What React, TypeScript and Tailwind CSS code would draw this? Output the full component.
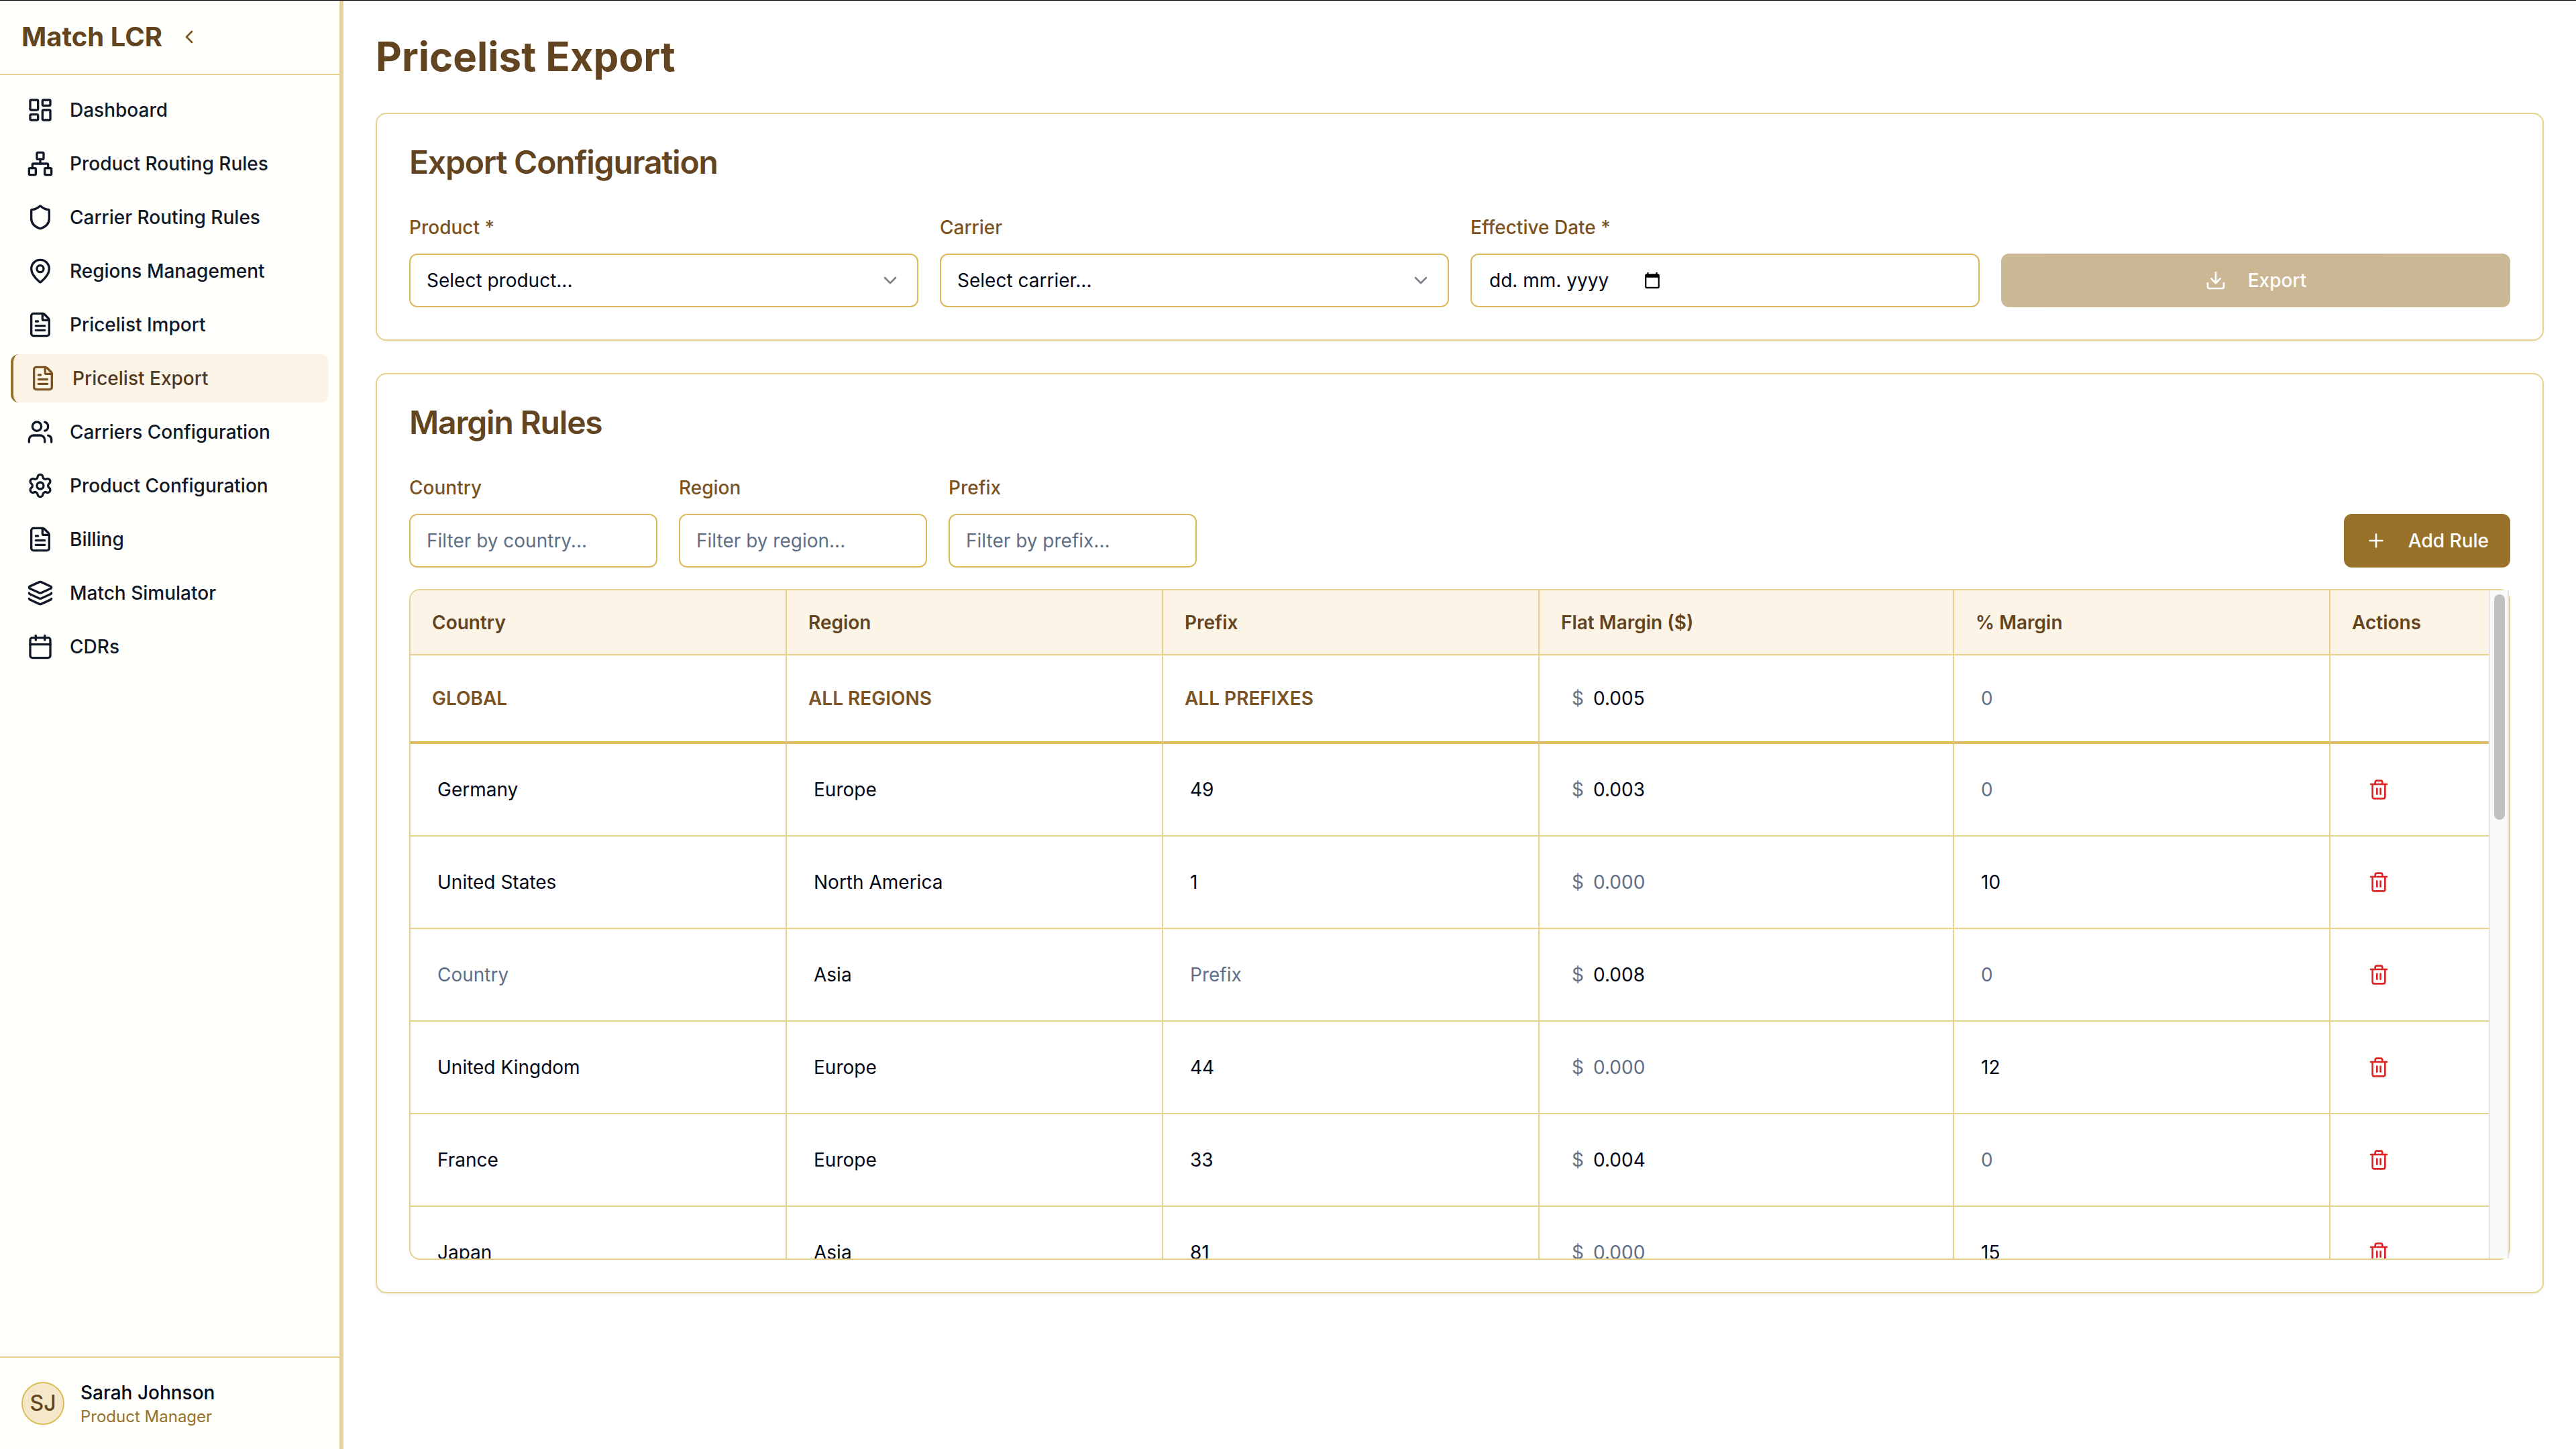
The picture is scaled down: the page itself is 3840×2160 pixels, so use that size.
import {
  Calendar,
  ChevronDown,
  ChevronLeft,
  Download,
  FileText,
  Layers,
  LayoutDashboard,
  MapPin,
  Network,
  Plus,
  Settings,
  Shield,
  Trash2,
  Users,
  type LucideIcon,
} from "lucide-react";

type NavEntry = { label: string; icon: LucideIcon; active?: boolean };

const navEntries: NavEntry[] = [
  { label: "Dashboard", icon: LayoutDashboard },
  { label: "Product Routing Rules", icon: Network },
  { label: "Carrier Routing Rules", icon: Shield },
  { label: "Regions Management", icon: MapPin },
  { label: "Pricelist Import", icon: FileText },
  { label: "Pricelist Export", icon: FileText, active: true },
  { label: "Carriers Configuration", icon: Users },
  { label: "Product Configuration", icon: Settings },
  { label: "Billing", icon: FileText },
  { label: "Match Simulator", icon: Layers },
  { label: "CDRs", icon: Calendar },
];

type Rule = { country: string; region: string; prefix: string; flat: string; percent: string };

const rules: Rule[] = [
  { country: "Germany", region: "Europe", prefix: "49", flat: "0.003", percent: "" },
  { country: "United States", region: "North America", prefix: "1", flat: "", percent: "10" },
  { country: "", region: "Asia", prefix: "", flat: "0.008", percent: "" },
  { country: "United Kingdom", region: "Europe", prefix: "44", flat: "", percent: "12" },
  { country: "France", region: "Europe", prefix: "33", flat: "0.004", percent: "" },
  { country: "Japan", region: "Asia", prefix: "81", flat: "", percent: "15" },
];

const fieldClass =
  "h-20 w-full rounded-xl border-2 border-[#dbb95c] bg-white px-6 text-[28px] text-[#020817] placeholder:text-[#5f6f87] placeholder:opacity-100";

function Sidebar() {
  return (
    <aside className="sticky top-0 flex h-screen w-[512px] shrink-0 flex-col border-r-[6px] border-[#e6d3a0] bg-[#fffffb]">
      <div className="flex h-28 items-center gap-4 border-b-2 border-[#e6d28c] px-8">
        <span className="text-[40px] leading-14 font-bold text-[#634420]">Match LCR</span>
        <button type="button" aria-label="Collapse sidebar" className="flex size-12 items-center justify-center">
          <ChevronLeft className="size-8 text-[#7b5323]" />
        </button>
      </div>
      <nav className="flex flex-1 flex-col gap-2 p-4">
        {navEntries.map(({ label, icon: Icon, active }) => (
          <a
            key={label}
            href="#"
            aria-current={active ? "page" : undefined}
            className={
              active
                ? "flex h-18 items-center gap-6 rounded-xl border-l-4 border-[#98722b] bg-[#fcf5e7] px-6 text-[28px] font-medium text-[#533a20]"
                : "flex h-18 items-center gap-6 rounded-xl px-6 text-[28px] font-medium text-[#111827]"
            }
          >
            <Icon className={active ? "size-10 text-[#7b5323]" : "size-10"} />
            {label}
          </a>
        ))}
      </nav>
      <div className="flex items-center gap-6 border-t-2 border-[#e6d28c] p-8">
        <div className="flex size-16 items-center justify-center rounded-full border-2 border-[#dbbd5d] bg-[#f4e8c8] text-[32px] font-medium text-[#634420]">
          SJ
        </div>
        <div>
          <p className="text-[28px] leading-10 font-medium text-[#020817]">Sarah Johnson</p>
          <p className="text-2xl leading-8 text-[#98722b]">Product Manager</p>
        </div>
      </div>
    </aside>
  );
}

function FieldLabel({ htmlFor, children }: { htmlFor: string; children: string }) {
  return (
    <label htmlFor={htmlFor} className="mb-[14px] block text-[28px] leading-[50px] font-medium text-[#7b5323]">
      {children}
    </label>
  );
}

function SelectField({ id, label, placeholder }: { id: string; label: string; placeholder: string }) {
  return (
    <div>
      <FieldLabel htmlFor={id}>{label}</FieldLabel>
      <div className="relative">
        <select id={id} className={`${fieldClass} appearance-none`}>
          <option>{placeholder}</option>
        </select>
        <ChevronDown className="pointer-events-none absolute top-6 right-[26px] size-8 text-[#020817] opacity-50" />
      </div>
    </div>
  );
}

function DateField() {
  return (
    <div>
      <FieldLabel htmlFor="effective-date">Effective Date *</FieldLabel>
      <div className="flex h-20 items-center rounded-xl border-2 border-[#dbb95c] bg-white px-[26px]">
        <input
          id="effective-date"
          placeholder="dd. mm. yyyy"
          className="w-[230px] text-[28px] text-[#020817] placeholder:text-[#020817] placeholder:opacity-100"
        />
        <button type="button" aria-label="Open calendar">
          <svg viewBox="0 0 24 24" className="size-[26px] fill-black">
            <path d="M20 3h-1V1h-2v2H7V1H5v2H4c-1.1 0-2 .9-2 2v16c0 1.1.9 2 2 2h16c1.1 0 2-.9 2-2V5c0-1.1-.9-2-2-2zm0 18H4V8h16v13z" />
          </svg>
        </button>
      </div>
    </div>
  );
}

function ExportConfiguration() {
  return (
    <section className="rounded-2xl border-2 border-[#e6d28c] bg-white p-12 shadow-[0_2px_4px_rgba(0,0,0,0.05)]">
      <h2 className="mb-12 text-5xl leading-none font-semibold tracking-tight text-[#634420]">Export Configuration</h2>
      <div className="grid grid-cols-4 items-end gap-8">
        <SelectField id="product" label="Product *" placeholder="Select product..." />
        <SelectField id="carrier" label="Carrier" placeholder="Select carrier..." />
        <DateField />
        <button
          type="button"
          disabled
          className="flex h-20 items-center justify-center gap-8 rounded-xl bg-[#98722b] text-[28px] font-medium text-white opacity-50"
        >
          <Download className="size-8" />
          Export
        </button>
      </div>
    </section>
  );
}

function FilterField({ id, label, placeholder }: { id: string; label: string; placeholder: string }) {
  return (
    <div className="w-[370px]">
      <FieldLabel htmlFor={id}>{label}</FieldLabel>
      <input id={id} placeholder={placeholder} className={fieldClass} />
    </div>
  );
}

const cellBorder = "border-r-2 border-b-2 border-[#e6d28c]";
const globalBorder = "border-r-2 border-b-4 border-r-[#e6d28c] border-b-[#dbbb5c]";

function CellInput({ label, value, placeholder }: { label: string; value: string; placeholder: string }) {
  return (
    <input
      aria-label={label}
      defaultValue={value}
      placeholder={placeholder}
      className="h-16 w-full px-2 text-[28px] text-[#020817] placeholder:text-[#5f6f87] placeholder:opacity-100"
    />
  );
}

function FlatInput({ value }: { value: string }) {
  return (
    <div className="flex items-center pl-4">
      <span className="w-6 shrink-0 text-[28px] text-[#6b7280]">$</span>
      <CellInput label="Flat margin" value={value} placeholder="0.000" />
    </div>
  );
}

function RulesTable() {
  return (
    <div className="flex h-[1000px] rounded-2xl border-2 border-[#e6d28c]">
      <div className="min-w-0 flex-1 overflow-auto rounded-l-2xl [scrollbar-width:none]">
        <table className="w-full table-fixed border-separate border-spacing-0 text-left text-[28px]">
          <thead>
            <tr className="h-[97px] bg-[#fcf5e7] text-[#634420]">
              <th className={`w-[561px] px-8 font-semibold ${cellBorder}`}>Country</th>
              <th className={`w-[561px] px-8 font-semibold ${cellBorder}`}>Region</th>
              <th className={`w-[561px] px-8 font-semibold ${cellBorder}`}>Prefix</th>
              <th className={`w-[618px] px-8 font-semibold ${cellBorder}`}>Flat Margin ($)</th>
              <th className={`w-[561px] px-8 font-semibold ${cellBorder}`}>% Margin</th>
              <th className="border-b-2 border-[#e6d28c] px-8 font-semibold">Actions</th>
            </tr>
          </thead>
          <tbody>
            <tr className="h-[132px] font-semibold text-[#7b5323]">
              <td className={`px-8 ${globalBorder}`}>GLOBAL</td>
              <td className={`px-8 ${globalBorder}`}>ALL REGIONS</td>
              <td className={`px-8 ${globalBorder}`}>ALL PREFIXES</td>
              <td className={`px-8 font-normal ${globalBorder}`}>
                <FlatInput value="0.005" />
              </td>
              <td className={`px-8 font-normal ${globalBorder}`}>
                <CellInput label="Percent margin" value="" placeholder="0" />
              </td>
              <td className="border-b-4 border-[#dbbb5c]" />
            </tr>
            {rules.map((rule, index) => (
              <tr key={index} className="h-[138px]">
                <td className={`px-8 ${cellBorder}`}>
                  <CellInput label="Country" value={rule.country} placeholder="Country" />
                </td>
                <td className={`px-8 ${cellBorder}`}>
                  <CellInput label="Region" value={rule.region} placeholder="Region" />
                </td>
                <td className={`px-8 ${cellBorder}`}>
                  <CellInput label="Prefix" value={rule.prefix} placeholder="Prefix" />
                </td>
                <td className={`px-8 ${cellBorder}`}>
                  <FlatInput value={rule.flat} />
                </td>
                <td className={`px-8 ${cellBorder}`}>
                  <CellInput label="Percent margin" value={rule.percent} placeholder="0" />
                </td>
                <td className="border-b-2 border-[#e6d28c] px-8">
                  <button type="button" aria-label="Delete rule" className="flex h-18 items-center px-6">
                    <Trash2 className="size-8 text-[#dc2626]" />
                  </button>
                </td>
              </tr>
            ))}
          </tbody>
        </table>
      </div>
      <div className="w-[30px] shrink-0 border-x-2 border-[#e5e5e5] bg-[#fafafa] px-1.5 py-1.5">
        <div className="h-[336px] w-4 rounded-full bg-[#c1c1c1]" />
      </div>
    </div>
  );
}

function MarginRules() {
  return (
    <section className="rounded-2xl border-2 border-[#e6d28c] bg-white p-12 shadow-[0_2px_4px_rgba(0,0,0,0.05)]">
      <h2 className="mb-12 text-5xl leading-none font-semibold tracking-tight text-[#634420]">Margin Rules</h2>
      <div className="mb-8 flex items-end gap-8">
        <FilterField id="filter-country" label="Country" placeholder="Filter by country..." />
        <FilterField id="filter-region" label="Region" placeholder="Filter by region..." />
        <FilterField id="filter-prefix" label="Prefix" placeholder="Filter by prefix..." />
        <button
          type="button"
          className="ml-auto flex h-20 items-center gap-8 rounded-xl bg-[#98722b] px-8 text-[28px] font-medium text-white"
        >
          <Plus className="size-8" />
          Add Rule
        </button>
      </div>
      <RulesTable />
    </section>
  );
}

export default function App() {
  return (
    <div className="flex min-h-screen bg-white font-['Inter',sans-serif]">
      <div className="fixed inset-x-0 top-0 z-10 h-px bg-black" />
      <Sidebar />
      <main className="flex min-w-0 flex-1 flex-col gap-12 p-12">
        <h1 className="text-6xl leading-18 font-bold text-[#634420]">Pricelist Export</h1>
        <ExportConfiguration />
        <MarginRules />
      </main>
    </div>
  );
}
